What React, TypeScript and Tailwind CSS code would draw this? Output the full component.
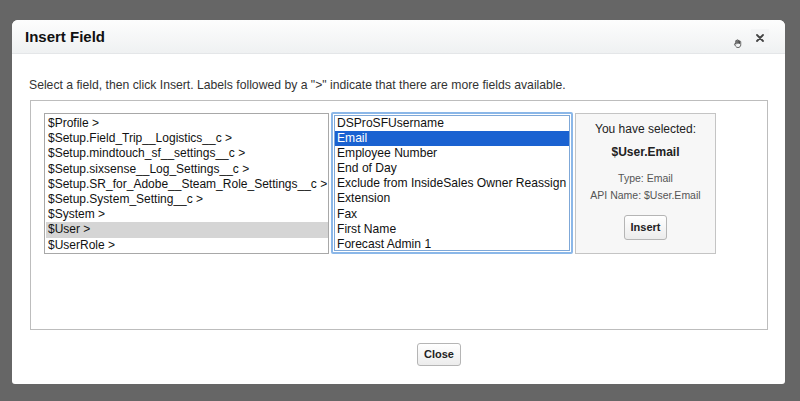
const leftItems = [
  "$Profile >",
  "$Setup.Field_Trip__Logistics__c >",
  "$Setup.mindtouch_sf__settings__c >",
  "$Setup.sixsense__Log_Settings__c >",
  "$Setup.SR_for_Adobe__Steam_Role_Settings__c >",
  "$Setup.System_Setting__c >",
  "$System >",
  "$User >",
  "$UserRole >",
];

const fieldItems = [
  "DSProSFUsername",
  "Email",
  "Employee Number",
  "End of Day",
  "Exclude from InsideSales Owner Reassign",
  "Extension",
  "Fax",
  "First Name",
  "Forecast Admin 1",
];

export default function App() {
  return (
    <div
      className="w-[800px] h-[401px] bg-[#666666] pt-[20px] pl-[12px] overflow-hidden"
      style={{ fontFamily: '"Liberation Sans", Arial, sans-serif' }}
    >
      <div className="w-[773px] h-[364px] bg-white rounded-t-[6px] rounded-b-[3px] flex flex-col">
        {/* header */}
        <div className="h-[34px] flex items-center justify-between pl-[13px] pr-[16px] rounded-t-[6px] bg-gradient-to-b from-[#fdfdfd] to-[#eff1f2] border-b border-[#e4e6e8]">
          <h2 className="text-[15px] font-bold text-[#111] leading-none">Insert Field</h2>
          <div className="flex items-center gap-[9px] pt-[2px]">
            <svg width="9" height="9" viewBox="0 0 10 10" className="mt-[12px]">
              <path
                d="M3 5.5V2.2a.7.7 0 0 1 1.4 0V5 M4.4 4.5V1.6a.7.7 0 0 1 1.4 0v3 M5.8 4.6V2.2a.7.7 0 0 1 1.4 0v2.6 M7.2 4.8V3.2a.7.7 0 0 1 1.4 0V6.5c0 1.8-1.3 3-3 3-1.2 0-2-.5-2.6-1.4L1.6 6a.8.8 0 0 1 1.3-.8L3 5.5"
                fill="none"
                stroke="#444"
                strokeWidth="0.9"
                strokeLinecap="round"
                strokeLinejoin="round"
              />
            </svg>
            <div className="w-[18px] h-[18px] bg-[#f4f5f6] flex items-center justify-center">
              <svg width="8" height="8" viewBox="0 0 8 8">
                <path d="M1 1L7 7M7 1L1 7" stroke="#444" strokeWidth="1.8" strokeLinecap="round" />
              </svg>
            </div>
          </div>
        </div>

        {/* instructions */}
        <p className="mt-[24px] ml-[17px] text-[12.2px] leading-[14px] text-[#333] whitespace-nowrap">
          Select a field, then click Insert. Labels followed by a "&gt;" indicate that there are more fields available.
        </p>

        {/* picker box */}
        <div className="mt-[8px] ml-[18px] w-[738px] h-[230px] border border-[#bdbdbd] pt-[12px] pl-[13px] flex items-start">
          <div className="w-[285px] h-[141px] border border-[#a8a8a8] pt-[2px] pl-[1px] text-[12px] text-[#111]">
            {leftItems.map((item) => (
              <div
                key={item}
                className={`h-[15.2px] leading-[15.2px] pl-[2px] whitespace-nowrap ${item === "$User >" ? "bg-[#d5d5d5]" : ""}`}
              >
                {item}
              </div>
            ))}
          </div>

          <div className="ml-[2px] w-[242px] h-[142px] border-[2px] border-[#8bb7e8] rounded-[2px] p-[1px] -mt-[1px]">
            <div className="h-full border border-[#7fa8d8] text-[12.1px] text-[#111] overflow-hidden">
              {fieldItems.map((item) => (
                <div
                  key={item}
                  className={`h-[15.1px] leading-[15.1px] pl-[2px] whitespace-nowrap ${item === "Email" ? "bg-[#1a62d1] text-white" : ""}`}
                >
                  {item}
                </div>
              ))}
            </div>
          </div>

          <div className="ml-[2px] w-[141px] h-[141px] border border-[#c4c4c4] bg-[#f7f7f7] flex flex-col items-center pt-[8px]">
            <div className="text-[12px] leading-[14px] text-[#222]">You have selected:</div>
            <div className="mt-[9px] text-[12px] leading-[14px] font-bold text-[#222]">$User.Email</div>
            <div className="mt-[13px] text-[10.5px] leading-[13px] text-[#555]">Type: Email</div>
            <div className="mt-[4px] text-[10.5px] leading-[13px] text-[#555]">API Name: $User.Email</div>
            <button className="mt-[13px] h-[25px] px-[6px] text-[11px] font-bold text-[#222] border border-[#b5b5b5] rounded-[3px] bg-gradient-to-b from-[#ffffff] to-[#ececec]">
              Insert
            </button>
          </div>
        </div>

        {/* footer */}
        <div className="mt-[11px] pl-[405px]">
          <button className="h-[23px] w-[44px] text-[11px] font-bold text-[#222] border border-[#b5b5b5] rounded-[3px] bg-gradient-to-b from-[#ffffff] to-[#ececec]">
            Close
          </button>
        </div>
      </div>
    </div>
  );
}
